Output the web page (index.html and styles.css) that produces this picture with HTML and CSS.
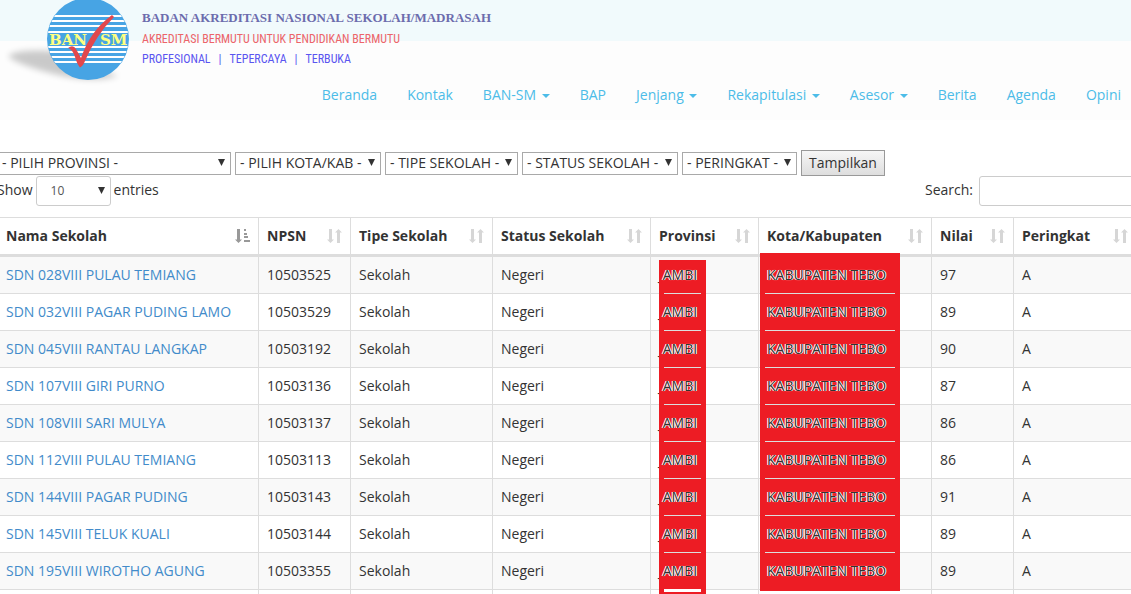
FILE: index.html
```html
<!DOCTYPE html>
<html lang="id">
<head>
	<meta charset="utf-8">
	<title>BAN-SM</title>
	<link rel="stylesheet" href="styles.css">
</head>
<body>
	<svg class="simbol" width="0" height="0" aria-hidden="true">
		<symbol id="sort" viewBox="0 0 15 14"><path d="M2 0h3v10.500h2L3.500 14 0 10.500h2zM10 14V3.500H8L11.500 0 15 3.500h-2V14z"/></symbol>
		<symbol id="sort-asc" viewBox="0 0 15 14"><path d="M2 0h3v10.500h2L3.500 14 0 10.500h2zM9 0h2v2H9zM9 4h3v2H9zM9 7h4v2H9zM9 11h6v2H9z"/></symbol>
	</svg>

	<header>
		<div class="topbar"></div>
		<a class="logo" href="#">
			<svg class="lambang" width="134" height="90" viewBox="0 0 134 90" aria-hidden="true">
				<defs>
					<filter id="kabur" x="-20%" y="-40%" width="140%" height="180%"><feGaussianBlur stdDeviation="3"/></filter>
					<clipPath id="bulat"><circle cx="88" cy="39" r="40.500"/></clipPath>
				</defs>
				<path d="M8 56Q16 49 55 51L118 76Q90 84 50 73Q16 64 8 56Z" fill="#000" opacity=".2" filter="url(#kabur)"/>
				<circle cx="88" cy="39" r="41" fill="#47a4e4"/>
				<path clip-path="url(#bulat)" stroke="#fff" stroke-width="2" d="M47 16h84M47 21h84M47 26h84M47 32h84M47 47h84M47 52h84M47 57h84M47 62h84"/>
				<text x="49" y="45" class="huruf">BAN</text>
				<text x="100" y="45" class="huruf">SM</text>
				<path d="M68 48Q73 44 76 49L81 58Q90 31 112 15L114 17Q96 35 85 61Q83 66 80 67.500Q77 64 75 57Q73 50 68 48Z" fill="#e1474d"/>
			</svg>
			<span class="judul">
				<span class="nama">BADAN AKREDITASI NASIONAL SEKOLAH/MADRASAH</span>
				<span class="moto">AKREDITASI BERMUTU UNTUK PENDIDIKAN BERMUTU</span>
				<span class="nilai"><span>PROFESIONAL</span><span>|</span><span>TEPERCAYA</span><span>|</span><span>TERBUKA</span></span>
			</span>
		</a>
		<nav class="menu">
			<a href="#">Beranda</a>
			<a href="#">Kontak</a>
			<a href="#">BAN-SM <b class="caret"></b></a>
			<a href="#">BAP</a>
			<a href="#">Jenjang <b class="caret"></b></a>
			<a href="#">Rekapitulasi <b class="caret"></b></a>
			<a href="#">Asesor <b class="caret"></b></a>
			<a href="#">Berita</a>
			<a href="#">Agenda</a>
			<a href="#">Opini</a>
		</nav>
	</header>

	<main>
		<form class="filter">
			<select class="provinsi" aria-label="Provinsi"><option>- PILIH PROVINSI -</option></select>
			<select class="kota" aria-label="Kota/Kabupaten"><option>- PILIH KOTA/KAB -</option></select>
			<select class="tipe" aria-label="Tipe Sekolah"><option>- TIPE SEKOLAH -</option></select>
			<select class="status" aria-label="Status Sekolah"><option>- STATUS SEKOLAH -</option></select>
			<select class="peringkat" aria-label="Peringkat"><option>- PERINGKAT -</option></select>
			<button type="button">Tampilkan</button>
		</form>

		<div class="kontrol">
			<label>Show <select class="jumlah"><option>10</option></select> entries</label>
			<label>Search: <input type="search" class="cari"></label>
		</div>

		<table>
			<colgroup><col class="c1"><col class="c2"><col class="c3"><col class="c4"><col class="c5"><col class="c6"><col class="c7"><col></colgroup>
			<thead>
				<tr>
					<th>Nama Sekolah<svg class="urut aktif"><use href="#sort-asc"/></svg></th>
					<th>NPSN<svg class="urut"><use href="#sort"/></svg></th>
					<th>Tipe Sekolah<svg class="urut"><use href="#sort"/></svg></th>
					<th>Status Sekolah<svg class="urut"><use href="#sort"/></svg></th>
					<th>Provinsi<svg class="urut"><use href="#sort"/></svg><i class="blok blok-prov"></i></th>
					<th>Kota/Kabupaten<svg class="urut"><use href="#sort"/></svg><i class="blok blok-kota"></i></th>
					<th>Nilai<svg class="urut"><use href="#sort"/></svg></th>
					<th>Peringkat<svg class="urut"><use href="#sort"/></svg></th>
				</tr>
			</thead>
			<tbody>
				<tr><td><a href="#">SDN 028VIII PULAU TEMIANG</a></td><td>10503525</td><td>Sekolah</td><td>Negeri</td><td class="prov">J<span>AMBI</span></td><td class="kab"><span>KABUPATEN TEBO</span></td><td>97</td><td>A</td></tr>
				<tr><td><a href="#">SDN 032VIII PAGAR PUDING LAMO</a></td><td>10503529</td><td>Sekolah</td><td>Negeri</td><td class="prov">J<span>AMBI</span></td><td class="kab"><span>KABUPATEN TEBO</span></td><td>89</td><td>A</td></tr>
				<tr><td><a href="#">SDN 045VIII RANTAU LANGKAP</a></td><td>10503192</td><td>Sekolah</td><td>Negeri</td><td class="prov">J<span>AMBI</span></td><td class="kab"><span>KABUPATEN TEBO</span></td><td>90</td><td>A</td></tr>
				<tr><td><a href="#">SDN 107VIII GIRI PURNO</a></td><td>10503136</td><td>Sekolah</td><td>Negeri</td><td class="prov">J<span>AMBI</span></td><td class="kab"><span>KABUPATEN TEBO</span></td><td>87</td><td>A</td></tr>
				<tr><td><a href="#">SDN 108VIII SARI MULYA</a></td><td>10503137</td><td>Sekolah</td><td>Negeri</td><td class="prov">J<span>AMBI</span></td><td class="kab"><span>KABUPATEN TEBO</span></td><td>86</td><td>A</td></tr>
				<tr><td><a href="#">SDN 112VIII PULAU TEMIANG</a></td><td>10503113</td><td>Sekolah</td><td>Negeri</td><td class="prov">J<span>AMBI</span></td><td class="kab"><span>KABUPATEN TEBO</span></td><td>86</td><td>A</td></tr>
				<tr><td><a href="#">SDN 144VIII PAGAR PUDING</a></td><td>10503143</td><td>Sekolah</td><td>Negeri</td><td class="prov">J<span>AMBI</span></td><td class="kab"><span>KABUPATEN TEBO</span></td><td>91</td><td>A</td></tr>
				<tr><td><a href="#">SDN 145VIII TELUK KUALI</a></td><td>10503144</td><td>Sekolah</td><td>Negeri</td><td class="prov">J<span>AMBI</span></td><td class="kab"><span>KABUPATEN TEBO</span></td><td>89</td><td>A</td></tr>
				<tr class="akhir"><td><a href="#">SDN 195VIII WIROTHO AGUNG</a></td><td>10503355</td><td>Sekolah</td><td>Negeri</td><td class="prov">J<span>AMBI</span></td><td class="kab"><span>KABUPATEN TEBO</span></td><td>89</td><td>A</td></tr>
				<tr><td></td><td></td><td></td><td></td><td></td><td></td><td></td><td></td></tr>
			</tbody>
		</table>
	</main>
</body>
</html>
```
FILE: styles.css
```css
*
{
	box-sizing: border-box;
}
body
{
	margin: 0;
	overflow: hidden;
	font: 14px/20px "Open Sans", sans-serif;
	color: #333;
	background-color: white;
}
a
{
	color: #428bca;
	text-decoration: none;
}
.simbol
{
	position: absolute;
}
header
{
	position: relative;
	background-color: #fdfdfd;
}
.topbar
{
	height: 41px;
	background-color: #f1fafc;
}
.logo
{
	position: absolute;
	left: 0;
	top: 0;
	display: flex;
	gap: 8px;
}
.huruf
{
	font: bold 15px "DejaVu Serif", serif;
	fill: #ffff80;
}
.judul
{
	display: flex;
	flex-direction: column;
	padding-top: 8px;
	white-space: nowrap;
}
.nama
{
	font: bold 13px/20px "Liberation Serif", serif;
	color: #6c6cad;
}
.moto
{
	font: 12px/22px "Roboto Condensed", Lato, sans-serif;
	color: #ec6469;
}
.nilai
{
	display: flex;
	gap: 8px;
	font: 12px/18px "Roboto Condensed", Lato, sans-serif;
	color: #5a55f0;
}
.menu
{
	display: flex;
	justify-content: flex-end;
	margin-right: -5px;
	padding-top: 29px;
}
.menu a
{
	height: 50px;
	padding: 15px;
	color: #4cbce8;
	white-space: nowrap;
}
.caret
{
	display: inline-block;
	margin-left: 2px;
	vertical-align: middle;
	border-top: 4px solid;
	border-left: 4px solid transparent;
	border-right: 4px solid transparent;
}
main
{
	margin: 0 -6px 0 -3px;
	padding-top: 30px;
}
.filter
{
	display: flex;
	align-items: center;
	gap: 4px;
}
select
{
	appearance: none;
	height: 23px;
	padding: 0 4px;
	border: 1px solid #a9a9a9;
	border-radius: 0;
	color: #333;
	font: 14px/20px "Open Sans", sans-serif;
	background: white url("data:image/svg+xml,%3Csvg xmlns='http://www.w3.org/2000/svg' width='7' height='9'%3E%3Cpath d='M0 0h7L3.500 7z' fill='%23333'/%3E%3C/svg%3E") no-repeat right 5px center;
}
.provinsi
{
	width: 234px;
}
.kota
{
	width: 146px;
}
.tipe
{
	width: 133px;
}
.status
{
	width: 156px;
}
.peringkat
{
	width: 115px;
}
.filter button
{
	width: 84px;
	height: 26px;
	padding: 0;
	border: 1px solid #999;
	color: #333;
	font: 14px/20px "Open Sans", sans-serif;
	background: linear-gradient(#f6f6f6, #dedede);
}
.kontrol
{
	display: flex;
	justify-content: space-between;
	height: 41px;
	padding-right: 1px;
}
.kontrol label
{
	display: flex;
	align-items: flex-start;
	gap: 3px;
	line-height: 28px;
}
.jumlah, .cari
{
	height: 30px;
	border: 1px solid #ccc;
	border-radius: 3px;
}
.jumlah
{
	width: 75px;
	padding-left: 14px;
	font-size: 12px;
	color: #555;
}
.cari
{
	width: 157px;
	margin-left: 3px;
}
table
{
	width: 100%;
	table-layout: fixed;
	border-collapse: separate;
	border-spacing: 0;
	border-top: 1px solid #ddd;
	border-left: 1px solid #ddd;
}
.c1
{
	width: 261px;
}
.c2
{
	width: 92px;
}
.c3
{
	width: 142px;
}
.c4
{
	width: 158px;
}
.c5
{
	width: 108px;
}
.c6
{
	width: 173px;
}
.c7
{
	width: 82px;
}
th, td
{
	position: relative;
	height: 37px;
	padding: 8px;
	text-align: left;
	white-space: nowrap;
	border-right: 1px solid #ddd;
	border-bottom: 1px solid #ddd;
}
th
{
	height: 39px;
	border-bottom-width: 3px;
}
tbody tr:nth-child(odd)
{
	background-color: #f9f9f9;
}
.urut
{
	position: absolute;
	right: 8px;
	bottom: 11px;
	width: 15px;
	height: 14px;
	fill: #d6d6d6;
}
.aktif
{
	fill: #999;
}
/* red blocks over the two region columns */
.blok
{
	position: absolute;
	z-index: 1;
	background-color: #ed1c24;
}
.blok-prov
{
	left: 8px;
	top: 42px;
	width: 47px;
	height: 340px;
}
.blok-kota
{
	left: 1px;
	top: 35px;
	width: 140px;
	height: 338px;
}
.prov span, .kab span
{
	position: relative;
	z-index: 2;
	text-shadow: 1px 0 white, -1px 0 white, 0 0 1px white;
}
.prov::after, .kab::after
{
	content: "";
	position: absolute;
	z-index: 2;
	bottom: -1px;
	height: 1px;
	background-color: #ddd;
}
.prov::after
{
	left: 13px;
	width: 37px;
}
.kab::after
{
	left: 6px;
	width: 130px;
}
.akhir .prov::after
{
	bottom: -3px;
	height: 3px;
	background-color: white;
}
.akhir .kab::after
{
	display: none;
}
```
